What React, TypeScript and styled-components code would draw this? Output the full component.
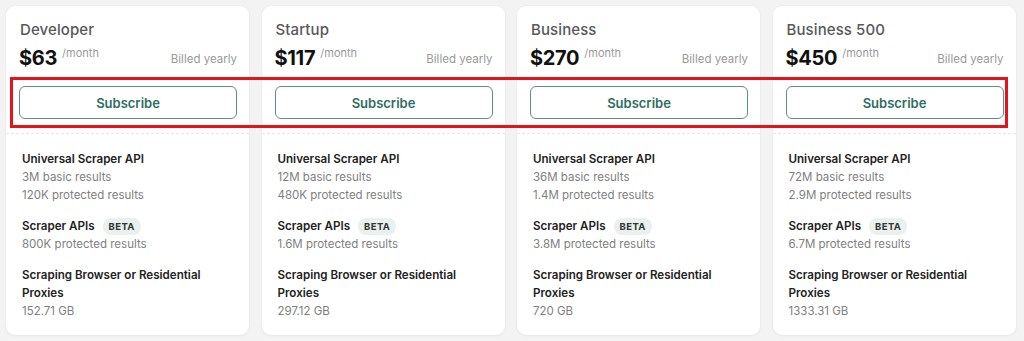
import React from "react";
import styled, { createGlobalStyle } from "styled-components";

const Global = createGlobalStyle`
  html, body { margin: 0; padding: 0; background: #f3f3f3; }
  body { font-family: Inter, "Noto Sans", sans-serif; -webkit-font-smoothing: antialiased; }
  * { box-sizing: border-box; }
`;

const Page = styled.div`
  position: relative;
  width: 1024px;
  height: 341px;
  padding: 6px 8px 6px 6px;
  display: grid;
  grid-template-columns: repeat(4, 243px);
  column-gap: 12.5px;
  background: #f3f3f3;
`;

const Card = styled.div`
  background: #fff;
  border-radius: 9px;
  box-shadow: 0 0 2px rgba(0, 0, 0, 0.06), 0 1px 3px rgba(0, 0, 0, 0.04);
  height: 329px;
  display: flex;
  flex-direction: column;
`;

const Header = styled.div`
  padding: 15px 12px 0 13px;
  display: flex;
  flex-direction: column;
`;

const Title = styled.div`
  font-size: 15px;
  font-weight: 500;
  color: #585858;
  line-height: 18px;
  height: 18px;
  letter-spacing: 0.1px;
  margin-left: 1px;
`;

const PriceRow = styled.div`
  display: flex;
  align-items: flex-start;
  margin-top: 6px;
  height: 26px;
`;

const Price = styled.span`
  font-size: 20px;
  font-weight: 700;
  color: #111;
  line-height: 26px;
  letter-spacing: -0.3px;
`;

const Per = styled.span`
  font-size: 11px;
  color: #999;
  margin-left: 5px;
  line-height: 14px;
  margin-top: 1px;
`;

const Billed = styled.span`
  margin-left: auto;
  font-size: 11.5px;
  color: #9a9a9a;
  line-height: 14px;
  margin-top: 7px;
`;

const Button = styled.button`
  margin-top: 15px;
  height: 33px;
  width: 218px;
  border: 1px solid #5d8f84;
  border-radius: 6px;
  background: #fff;
  color: #2f6d5f;
  font-family: Inter, sans-serif;
  font-size: 13px;
  font-weight: 600;
  cursor: pointer;
`;

const Divider = styled.div`
  margin-top: 14px;
  border-top: 1px dashed #e6e6e6;
`;

const Body = styled.div`
  padding: 16px 16px 0 16px;
  display: flex;
  flex-direction: column;
  gap: 13px;
`;

const Section = styled.div`
  display: flex;
  flex-direction: column;
`;

const Feature = styled.div`
  font-size: 11.6px;
  font-weight: 600;
  color: #222;
  line-height: 18px;
  display: flex;
  align-items: center;
`;

const Detail = styled.div`
  font-size: 11.5px;
  color: #808080;
  line-height: 18px;
`;

const Badge = styled.span`
  margin-left: 8px;
  background: #e9f0ed;
  color: #333;
  font-size: 9.5px;
  font-weight: 700;
  letter-spacing: 0.4px;
  padding: 2px 6px;
  border-radius: 8px;
  line-height: 13px;
`;

const Highlight = styled.div`
  position: absolute;
  left: 10px;
  top: 77px;
  width: 998px;
  height: 51px;
  border: 3px solid #e3141b;
  pointer-events: none;
`;

type Plan = {
  name: string;
  price: string;
  basic: string;
  prot: string;
  scraper: string;
  gb: string;
};

const plans: Plan[] = [
  { name: "Developer", price: "$63", basic: "3M", prot: "120K", scraper: "800K", gb: "152.71 GB" },
  { name: "Startup", price: "$117", basic: "12M", prot: "480K", scraper: "1.6M", gb: "297.12 GB" },
  { name: "Business", price: "$270", basic: "36M", prot: "1.4M", scraper: "3.8M", gb: "720 GB" },
  { name: "Business 500", price: "$450", basic: "72M", prot: "2.9M", scraper: "6.7M", gb: "1333.31 GB" },
];

export default function App() {
  return (
    <>
      <Global />
      <Page>
        {plans.map((p) => (
          <Card key={p.name}>
            <Header>
              <Title>{p.name}</Title>
              <PriceRow>
                <Price>{p.price}</Price>
                <Per>/month</Per>
                <Billed>Billed yearly</Billed>
              </PriceRow>
              <Button>Subscribe</Button>
            </Header>
            <Divider />
            <Body>
              <Section>
                <Feature>Universal Scraper API</Feature>
                <Detail>{p.basic} basic results</Detail>
                <Detail>{p.prot} protected results</Detail>
              </Section>
              <Section>
                <Feature>
                  Scraper APIs <Badge>BETA</Badge>
                </Feature>
                <Detail>{p.scraper} protected results</Detail>
              </Section>
              <Section>
                <Feature>Scraping Browser or Residential Proxies</Feature>
                <Detail>{p.gb}</Detail>
              </Section>
            </Body>
          </Card>
        ))}
        <Highlight />
      </Page>
    </>
  );
}
